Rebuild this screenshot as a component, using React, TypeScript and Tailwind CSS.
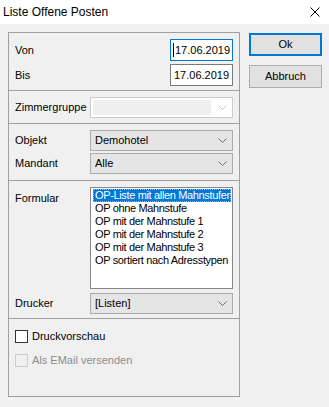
import React from "react";

const labelFont = { fontFamily: '"Liberation Sans", Arial, sans-serif' };

function Chevron({ disabled }: { disabled?: boolean }) {
  return (
    <svg width="9" height="6" viewBox="0 0 9 6" className="shrink-0">
      <path
        d="M0.5 0.5 L4.5 4.5 L8.5 0.5"
        fill="none"
        stroke={disabled ? "#c8c8c8" : "#707070"}
        strokeWidth="1"
      />
    </svg>
  );
}

function Combo({ value }: { value: string }) {
  return (
    <div className="flex h-[21px] w-[143px] items-center border border-[#acacac] bg-[#e5e5e5] pl-[4px] pr-[5px]">
      <span className="flex-1 text-[11px] leading-none text-black">{value}</span>
      <Chevron />
    </div>
  );
}

function Row({ label, children }: { label: string; children: React.ReactNode }) {
  return (
    <div className="flex items-center">
      <span className="w-[75px] text-[11px] leading-none text-black">{label}</span>
      {children}
    </div>
  );
}

const items = [
  "OP-Liste mit allen Mahnstufen",
  "OP ohne Mahnstufe",
  "OP mit der Mahnstufe 1",
  "OP mit der Mahnstufe 2",
  "OP mit der Mahnstufe 3",
  "OP sortiert nach Adresstypen",
];

export default function App() {
  return (
    <div className="h-[407px] w-[329px] overflow-hidden bg-[#f0f0f0]" style={labelFont}>
      <div className="flex h-[24px] items-center justify-between bg-white pl-[3px] pr-[9px]">
        <span className="text-[12px] leading-none text-black">Liste Offene Posten</span>
        <svg width="10" height="10" viewBox="0 0 10 10">
          <path d="M0.5 0.5 L9.5 9.5 M9.5 0.5 L0.5 9.5" stroke="#000" strokeWidth="1" />
        </svg>
      </div>

      <div className="flex gap-[9px] pl-[8px] pt-[8px]">
        {/* main panel */}
        <div className="flex h-[365px] w-[232px] flex-col border border-[#a0a0a0]">
          <div className="flex h-[58px] flex-col gap-[3px] border-b border-[#a0a0a0] pl-[6px] pr-[6px] pt-[6px]">
            <Row label="Von">
              <div className="ml-auto flex h-[22px] w-[63px] items-center border border-[#0078d7] bg-white pl-[2px]">
                <span className="mr-[1px] h-[14px] w-px bg-black" />
                <span className="text-[11px] leading-none">17.06.2019</span>
              </div>
            </Row>
            <Row label="Bis">
              <div className="ml-auto flex h-[22px] w-[63px] items-center border border-[#7a7a7a] bg-white pl-[3px]">
                <span className="text-[11px] leading-none">17.06.2019</span>
              </div>
            </Row>
          </div>

          <div className="flex h-[33px] flex-col border-b border-[#a0a0a0] px-[6px] pt-[6px]">
            <Row label="Zimmergruppe">
              <div className="flex h-[21px] w-[143px] items-center border border-[#cccccc] bg-white p-[2px] pr-[5px]">
                <div className="h-full w-[118px] bg-[#efefef]" />
                <div className="flex flex-1 justify-end">
                  <Chevron disabled />
                </div>
              </div>
            </Row>
          </div>

          <div className="flex h-[57px] flex-col gap-[2px] border-b border-[#a0a0a0] px-[6px] pt-[6px]">
            <Row label="Objekt">
              <Combo value="Demohotel" />
            </Row>
            <Row label="Mandant">
              <Combo value="Alle" />
            </Row>
          </div>

          <div className="flex h-[138px] flex-col gap-[4px] border-b border-[#a0a0a0] px-[6px] pt-[6px]">
            <div className="flex items-start">
              <span className="w-[75px] pt-[6px] text-[11px] leading-none text-black">Formular</span>
              <div className="h-[102px] w-[143px] overflow-hidden border border-[#828790] bg-white p-[1px] pl-[2px]">
                {items.map((it, i) => (
                  <div
                    key={it}
                    className={
                      i === 0
                        ? "flex h-[13px] items-center whitespace-nowrap border border-dotted border-[#ffffff80] bg-[#0078d7] pl-[1px] text-[11px] leading-none tracking-[-0.35px] text-white"
                        : "flex h-[13px] items-center whitespace-nowrap pl-[2px] text-[11px] leading-none tracking-[-0.35px] text-black"
                    }
                  >
                    {it}
                  </div>
                ))}
              </div>
            </div>
            <Row label="Drucker">
              <Combo value="[Listen]" />
            </Row>
          </div>

          <div className="flex flex-1 flex-col gap-[11px] pl-[6px] pt-[11px]">
            <div className="flex items-center gap-[4px]">
              <span className="h-[13px] w-[13px] border border-[#333333] bg-white" />
              <span className="text-[11px] leading-none text-black">Druckvorschau</span>
            </div>
            <div className="flex items-center gap-[4px]">
              <span className="h-[13px] w-[13px] border border-[#cccccc] bg-[#f0f0f0]" />
              <span className="text-[11px] leading-none text-[#8d8d8d]">Als EMail versenden</span>
            </div>
          </div>
        </div>

        {/* buttons */}
        <div className="flex w-[73px] flex-col gap-[9px] pt-[1px]">
          <button className="flex h-[23px] items-center justify-center border-2 border-[#0078d7] bg-[#e1e1e1] text-[11px] leading-none text-black">
            Ok
          </button>
          <button className="flex h-[23px] items-center justify-center border border-[#adadad] bg-[#e1e1e1] text-[11px] leading-none text-black">
            Abbruch
          </button>
        </div>
      </div>
    </div>
  );
}
